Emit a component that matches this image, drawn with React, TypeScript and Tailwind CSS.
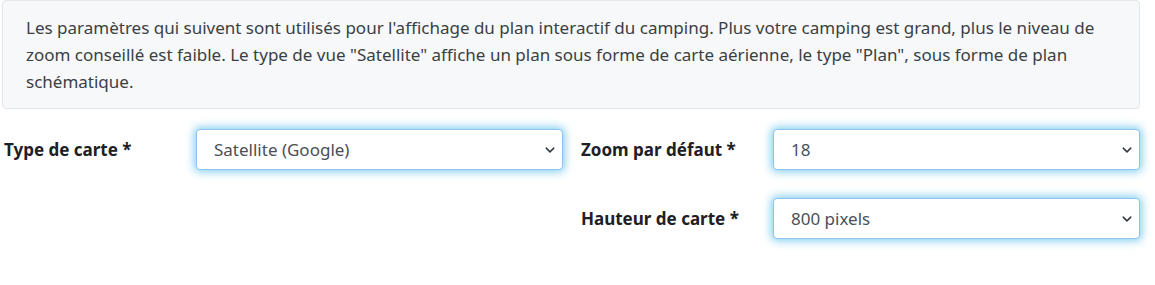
import React from "react";

function Chevron() {
  return (
    <svg width="10" height="10" viewBox="0 0 16 16" className="shrink-0">
      <path d="M2 5l6 6 6-6" fill="none" stroke="#343a40" strokeWidth="2.4" strokeLinecap="round" strokeLinejoin="round" />
    </svg>
  );
}

function Select({ value }: { value: string }) {
  return (
    <div className="flex h-[41px] flex-1 items-center justify-between rounded-[4px] border border-[#8cc3f0] bg-white pl-[17px] pr-[7px] text-[17px] text-[#495057] shadow-[0_0_8px_2px_rgba(102,195,235,0.8)]">
      <span>{value}</span>
      <Chevron />
    </div>
  );
}

function Field({ label, value }: { label: string; value: string }) {
  return (
    <div className="flex items-center">
      <div className="w-[192px] text-[17px] font-bold text-[#1d2024]">{label}</div>
      <Select value={value} />
    </div>
  );
}

export default function App() {
  return (
    <div className="h-[285px] w-[1155px] bg-white" style={{ fontFamily: '"Noto Sans", "Open Sans", sans-serif' }}>
      <div className="ml-[2px] w-[1138px] rounded-[4px] border border-[#e3e6ea] bg-[#f7f8fa] px-[23px] pb-[13px] pt-[13px] text-[17px] leading-[27px] text-[#3a3f44]">
        Les paramètres qui suivent sont utilisés pour l'affichage du plan interactif du camping. Plus votre camping est grand, plus le niveau de zoom conseillé est faible. Le type de vue "Satellite" affiche un plan sous forme de carte aérienne, le type "Plan", sous forme de plan schématique.
      </div>
      <div className="ml-[4px] mt-[20px] grid w-[1136px] grid-cols-2 gap-x-[18px] gap-y-[28px]">
        <Field label="Type de carte *" value="Satellite (Google)" />
        <Field label="Zoom par défaut *" value="18" />
        <div />
        <Field label="Hauteur de carte *" value="800 pixels" />
      </div>
    </div>
  );
}
